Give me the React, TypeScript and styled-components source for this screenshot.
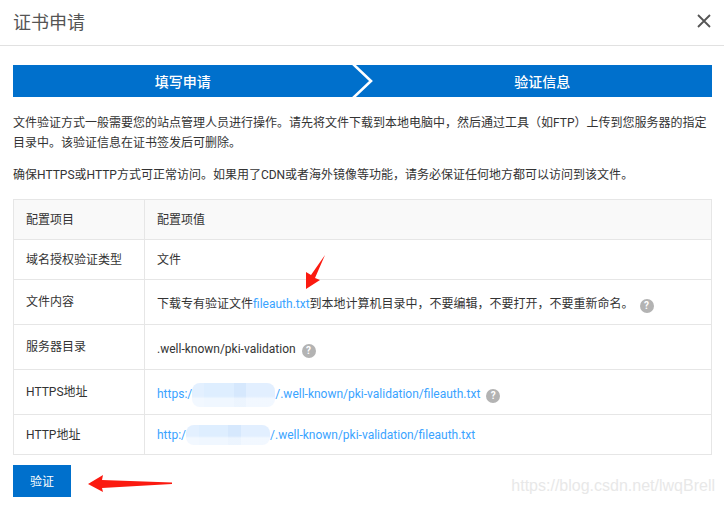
import React from "react";
import styled, { createGlobalStyle } from "styled-components";

const Global = createGlobalStyle`
  html, body { margin: 0; padding: 0; background: #fff; }
  body { font-family: Roboto, "Noto Sans CJK SC", sans-serif; font-size: 12px; color: #333; }
`;

const Page = styled.div`
  position: relative;
  width: 724px;
  height: 505px;
  overflow: hidden;
  background: #fff;
  font-family: Roboto, "Noto Sans CJK SC", sans-serif;
`;

const Header = styled.header`
  height: 46px;
  box-sizing: border-box;
  border-bottom: 1px solid #e1e1e1;
  display: flex;
  align-items: center;
  justify-content: space-between;
  padding: 0 13px 3px 13px;
`;

const Title = styled.h1`
  margin: 0;
  font-size: 18px;
  font-weight: 400;
  color: #555;
`;

const Close = styled.svg`
  width: 14px;
  height: 14px;
  display: block;
`;

const Body = styled.main`
  padding: 19px 12px 0 13px;
`;

const Steps = styled.div`
  position: relative;
  display: flex;
  height: 32px;
  background: #0070cc;
`;

const Step = styled.div<{ $first?: boolean }>`
  flex: 1;
  display: flex;
  align-items: center;
  justify-content: center;
  color: #fff;
  font-size: 14px;
  font-weight: 500;
  padding: ${(p) => (p.$first ? "0 9px 0 0" : "0 0 0 11px")};
`;

const Chevron = styled.svg`
  position: absolute;
  left: 338px;
  top: 0;
  width: 24px;
  height: 32px;
`;

const Para = styled.p<{ $top: number }>`
  margin: ${(p) => p.$top}px 0 0;
  font-size: 12px;
  line-height: 19.5px;
  color: #333;
`;

const Table = styled.table`
  margin-top: 13px;
  width: 699px;
  border-collapse: collapse;
  table-layout: fixed;
  font-size: 12px;
  color: #333;
`;

const Row = styled.tr<{ $h: number; $head?: boolean }>`
  height: ${(p) => p.$h}px;
  background: ${(p) => (p.$head ? "#f9f9f9" : "#fff")};
`;

const Cell = styled.td`
  border: 1px solid #e6e6e6;
  padding: 1px 12px 0;
  vertical-align: middle;
  line-height: 18px;
  white-space: nowrap;
  &:first-child { width: 106px; }
`;

const Nudged = styled.span`
  display: inline-block;
  padding-top: 4px;
`;

const Link = styled.a`
  color: #3aa3ff;
  text-decoration: none;
`;

const Help = styled.span`
  display: inline-flex;
  align-items: center;
  justify-content: center;
  width: 14px;
  height: 14px;
  border-radius: 50%;
  margin-left: 6px;
  vertical-align: -1px;
  background: #b3b3b3;
  color: #fff;
  font-size: 10px;
  font-weight: 700;
  line-height: 14px;
`;

const Blur = styled.span<{ $w: number; $h: number }>`
  display: inline-block;
  width: ${(p) => p.$w}px;
  height: ${(p) => p.$h}px;
  margin: -6px 0;
  vertical-align: middle;
  border-radius: 8px;
  background:
    linear-gradient(180deg, rgba(255, 255, 255, 0) 55%, rgba(255, 255, 255, 0.55) 65%),
    linear-gradient(90deg, #e3f0ff 0 15%, #deeeff 15% 50%, #d6e8fd 50% 65%, #e2efff 65% 100%);
`;

const Submit = styled.button`
  display: block;
  margin-top: 10px;
  width: 58px;
  height: 32px;
  border: 0;
  padding: 0;
  background: #0070cc;
  color: #fff;
  font: inherit;
  font-size: 12px;
`;

const Annotation = styled.svg`
  position: absolute;
  left: 0;
  top: 0;
  width: 724px;
  height: 505px;
  pointer-events: none;
`;

const Watermark = styled.div`
  position: absolute;
  right: 9px;
  top: 477px;
  font-family: "Liberation Sans", sans-serif;
  font-size: 16px;
  color: #e8e8e8;
  white-space: nowrap;
`;

export default function App() {
  return (
    <Page>
      <Global />
      <Header>
        <Title>证书申请</Title>
        <Close viewBox="0 0 14 14">
          <path d="M1 1 13 13M13 1 1 13" stroke="#555" strokeWidth="1.8" fill="none" />
        </Close>
      </Header>
      <Body>
        <Steps>
          <Step $first>填写申请</Step>
          <Step>验证信息</Step>
          <Chevron viewBox="0 0 24 32">
            <path d="M2 -1 20 16 2 33" stroke="#fff" strokeWidth="2.6" fill="none" />
          </Chevron>
        </Steps>
        <Para $top={17}>
          文件验证方式一般需要您的站点管理人员进行操作。请先将文件下载到本地电脑中，然后通过工具（如FTP）上传到您服务器的指定目录中。该验证信息在证书签发后可删除。
        </Para>
        <Para $top={13}>
          确保HTTPS或HTTP方式可正常访问。如果用了CDN或者海外镜像等功能，请务必保证任何地方都可以访问到该文件。
        </Para>
        <Table>
          <tbody>
            <Row $h={40} $head>
              <Cell>配置项目</Cell>
              <Cell>配置项值</Cell>
            </Row>
            <Row $h={40}>
              <Cell>域名授权验证类型</Cell>
              <Cell>文件</Cell>
            </Row>
            <Row $h={45}>
              <Cell>文件内容</Cell>
              <Cell>
                <Nudged>
                  下载专有验证文件<Link>fileauth.txt</Link>到本地计算机目录中，不要编辑，不要打开，不要重新命名。
                  <Help>?</Help>
                </Nudged>
              </Cell>
            </Row>
            <Row $h={45}>
              <Cell>服务器目录</Cell>
              <Cell>
                <Nudged>
                  .well-known/pki-validation<Help>?</Help>
                </Nudged>
              </Cell>
            </Row>
            <Row $h={45}>
              <Cell>HTTPS地址</Cell>
              <Cell>
                <Nudged>
                  <Link>
                    https:/<Blur $w={83} $h={24} />/.well-known/pki-validation/fileauth.txt
                  </Link>
                  <Help>?</Help>
                </Nudged>
              </Cell>
            </Row>
            <Row $h={40}>
              <Cell>HTTP地址</Cell>
              <Cell>
                <Link>
                  http:/<Blur $w={84} $h={20} />/.well-known/pki-validation/fileauth.txt
                </Link>
              </Cell>
            </Row>
          </tbody>
        </Table>
        <Submit>验证</Submit>
      </Body>
      <Annotation viewBox="0 0 724 505">
        <polygon points="325,255 315,278 320,280 306,289 306,272 311,275" fill="#fb1a10" />
        <polygon points="88,484 103,475 102,480 172,482.5 172,484 102,488 103,492" fill="#fb1a10" />
      </Annotation>
      <Watermark>https://blog.csdn.net/lwqBrell</Watermark>
    </Page>
  );
}
